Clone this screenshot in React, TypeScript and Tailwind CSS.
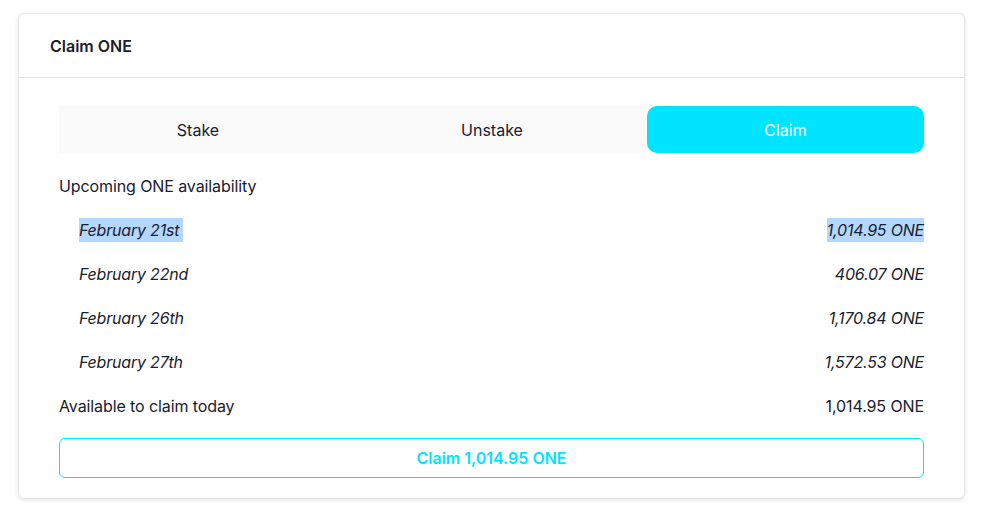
import React from "react";

const rows = [
  { date: "February 21st", amount: "1,014.95 ONE", selected: true },
  { date: "February 22nd", amount: "406.07 ONE" },
  { date: "February 26th", amount: "1,170.84 ONE" },
  { date: "February 27th", amount: "1,572.53 ONE" },
];

export default function App() {
  return (
    <div
      className="min-h-[512px] bg-white pt-[13px] pl-[18px] text-[#1a202c]"
      style={{ fontFamily: "Inter, 'Noto Sans', sans-serif" }}
    >
      <div className="w-[947px] rounded-md border border-[#e5e7eb] bg-white shadow-[0_1px_4px_rgba(0,0,0,0.12)]">
        <div className="flex h-[64px] items-center border-b border-[#e5e7eb] px-[31px]">
          <span className="text-base font-semibold leading-6">Claim ONE</span>
        </div>
        <div className="px-[40px] pt-[28px] pb-[20px]">
          <div className="grid h-[47px] grid-cols-[278px_310px_1fr] bg-[#fafafa] text-base">
            <div className="flex items-center justify-center">Stake</div>
            <div className="flex items-center justify-center">Unstake</div>
            <div className="flex items-center justify-center rounded-[10px] bg-[#00e4ff] text-white">
              Claim
            </div>
          </div>
          <div className="mt-[21px] text-base leading-6 tracking-[-0.1px]">Upcoming ONE availability</div>
          <div className="flex flex-col gap-[20px] pt-[20px]">
            {rows.map((r) => (
              <div key={r.date} className="flex justify-between pl-[20px] text-base italic leading-6 tracking-[-0.2px]">
                <span className={r.selected ? "bg-[#b4d7ff] pr-[4px]" : ""}>{r.date}</span>
                <span className={r.selected ? "bg-[#b4d7ff]" : ""}>{r.amount}</span>
              </div>
            ))}
            <div className="flex justify-between text-base leading-6 tracking-[-0.1px]">
              <span>Available to claim today</span>
              <span>1,014.95 ONE</span>
            </div>
            <button className="flex h-[40px] w-full items-center justify-center rounded-md border border-[#00e4ff] text-base font-semibold text-[#00e4ff]">
              Claim 1,014.95 ONE
            </button>
          </div>
        </div>
      </div>
    </div>
  );
}
